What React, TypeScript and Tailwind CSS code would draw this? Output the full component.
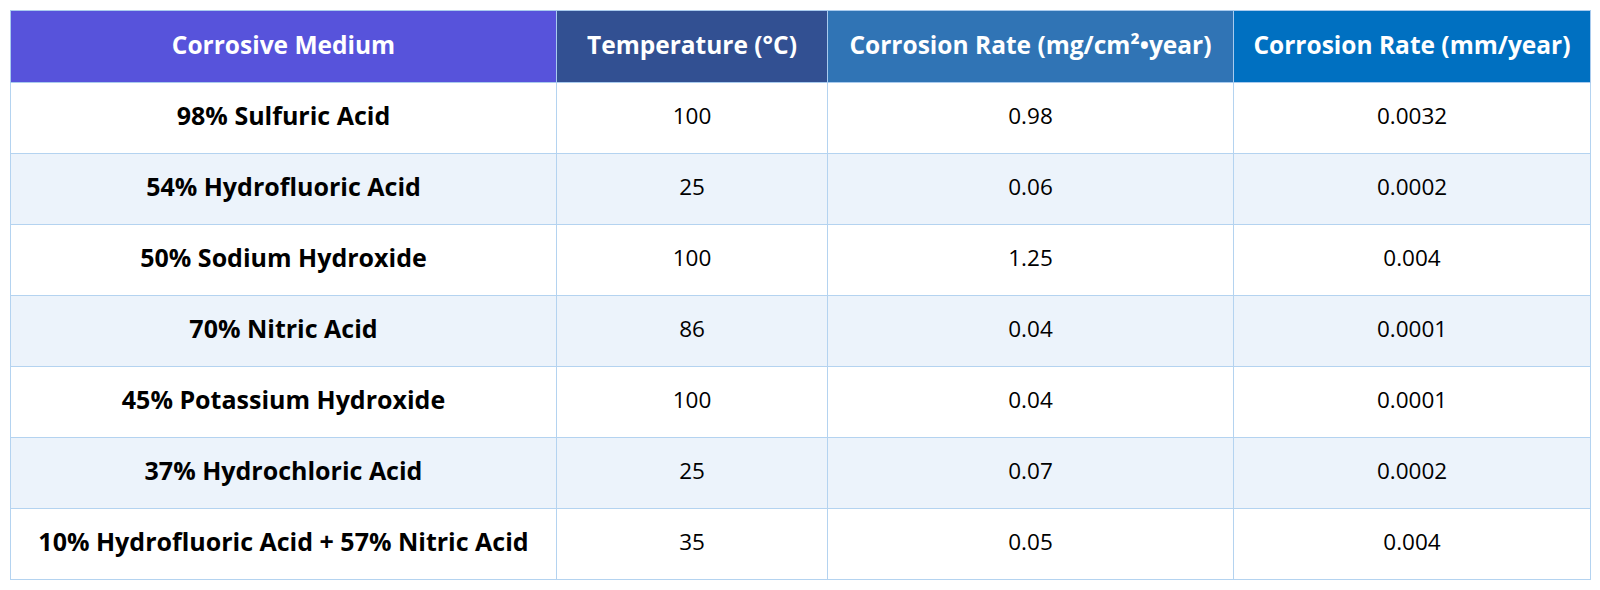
import React from "react";

const rows = [
  ["98% Sulfuric Acid", "100", "0.98", "0.0032"],
  ["54% Hydrofluoric Acid", "25", "0.06", "0.0002"],
  ["50% Sodium Hydroxide", "100", "1.25", "0.004"],
  ["70% Nitric Acid", "86", "0.04", "0.0001"],
  ["45% Potassium Hydroxide", "100", "0.04", "0.0001"],
  ["37% Hydrochloric Acid", "25", "0.07", "0.0002"],
  ["10% Hydrofluoric Acid + 57% Nitric Acid", "35", "0.05", "0.004"],
];

export default function App() {
  return (
    <div className="bg-white p-[10px] w-[1600px] h-[590px]" style={{ fontFamily: '"Open Sans", "Noto Sans", sans-serif' }}>
      <table className="w-[1580px] table-fixed border-collapse border border-[#5b9bd5] text-center">
        <colgroup>
          <col className="w-[546px]" />
          <col className="w-[271px]" />
          <col className="w-[406px]" />
          <col className="w-[357px]" />
        </colgroup>
        <thead>
          <tr className="h-[72px] text-white font-bold text-[24.5px]">
            <th className="bg-[#5753db] border border-[#a9cbee] font-bold pb-[2px]">Corrosive Medium</th>
            <th className="bg-[#325092] border border-[#a9cbee] font-bold pb-[2px]">Temperature (°C)</th>
            <th className="bg-[#3074b5] border border-[#a9cbee] font-bold pb-[2px]">Corrosion Rate (mg/cm²•year)</th>
            <th className="bg-[#0070c1] border border-[#a9cbee] font-bold pb-[2px]">Corrosion Rate (mm/year)</th>
          </tr>
        </thead>
        <tbody>
          {rows.map((r, i) => (
            <tr key={i} className={`h-[71px] text-[22.5px] text-black ${i % 2 === 1 ? "bg-[#ecf3fb]" : "bg-white"}`}>
              <td className="border border-[#b4d3f0] font-bold text-[25px] pb-[4px]">{r[0]}</td>
              <td className="border border-[#b4d3f0] pb-[4px]">{r[1]}</td>
              <td className="border border-[#b4d3f0] pb-[4px]">{r[2]}</td>
              <td className="border border-[#b4d3f0] pb-[4px]">{r[3]}</td>
            </tr>
          ))}
        </tbody>
      </table>
    </div>
  );
}
